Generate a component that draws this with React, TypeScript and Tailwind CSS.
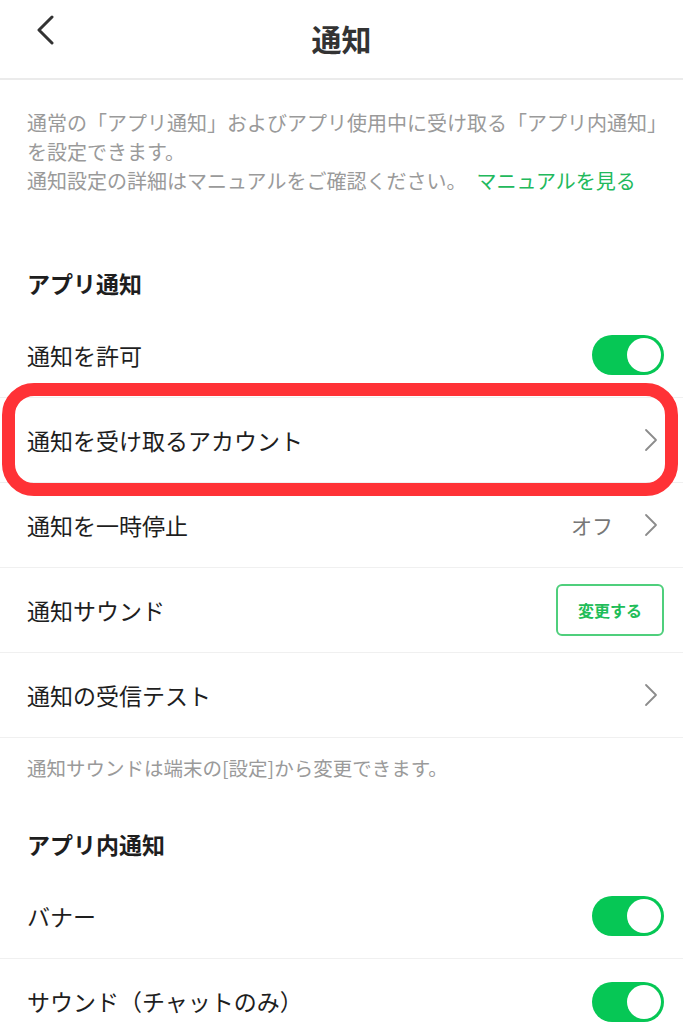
import React from "react";

const font = { fontFamily: '"Noto Sans CJK JP", "Noto Sans", sans-serif' };

function Toggle() {
    return (
        <div className="flex h-[40px] w-[72px] items-center justify-end rounded-full bg-[#06c755] pr-[3px]">
            <div className="h-[34px] w-[34px] rounded-full bg-white" />
        </div>
    );
}

function Chevron() {
    return (
        <svg width="16" height="24" viewBox="0 0 16 24" className="block">
            <polyline points="3,2 13,12 3,22" fill="none" stroke="#8c8c8c" strokeWidth="1.8" strokeLinecap="round" strokeLinejoin="round" />
        </svg>
    );
}

function Row({ label, right, divider = true, children }: { label: string; right?: React.ReactNode; divider?: boolean; children?: React.ReactNode }) {
    return (
        <div className={`relative flex h-[85px] items-center justify-between pl-[27px] ${divider ? "border-b border-[#f0f0f0]" : ""}`}>
            <span className="text-[23px] leading-none text-[#1e1e1e]">{label}</span>
            {right}
            {children}
        </div>
    );
}

export default function App() {
    return (
        <div className="min-h-[1024px] w-full overflow-hidden bg-white" style={font}>
            {/* header */}
            <div className="relative flex h-[80px] items-center justify-center border-b-2 border-[#ebebeb]">
                <button className="absolute left-[34px] top-[15px]">
                    <svg width="22" height="30" viewBox="0 0 22 30" className="block">
                        <polyline points="18,2 5,15 18,28" fill="none" stroke="#333" strokeWidth="3" strokeLinecap="round" strokeLinejoin="round" />
                    </svg>
                </button>
                <h1 className="-mt-[2px] text-[30px] font-bold leading-none text-[#333]">通知</h1>
            </div>

            {/* description */}
            <div className="h-[173px] px-[27px] pt-[28px] text-[20px] leading-[29px] text-[#9a9a9a]">
                <p className="whitespace-nowrap">通常の「アプリ通知」およびアプリ使用中に受け取る「アプリ内通知」</p>
                <p>を設定できます。</p>
                <p className="whitespace-nowrap">
                    通知設定の詳細はマニュアルをご確認ください。
                    <span className="ml-[10px] text-[#22b95c]">マニュアルを見る</span>
                </p>
            </div>

            {/* app notifications */}
            <div className="flex h-[60px] items-center pl-[27px]">
                <h2 className="text-[23px] font-bold leading-none text-[#1e1e1e]">アプリ通知</h2>
            </div>
            <Row label="通知を許可" right={<div className="pr-[19px]"><Toggle /></div>} />
            <Row label="通知を受け取るアカウント" right={<div className="pr-[24px]"><Chevron /></div>}>
                <div className="pointer-events-none absolute -bottom-[14px] left-[2px] right-[5px] -top-[15px] rounded-[32px] border-[13px] border-[#ff3236]" />
            </Row>
            <Row
                label="通知を一時停止"
                right={
                    <div className="flex items-center gap-[30px] pr-[24px]">
                        <span className="text-[21px] leading-none text-[#777]">オフ</span>
                        <Chevron />
                    </div>
                }
            />
            <Row
                label="通知サウンド"
                right={
                    <div className="pr-[19px]">
                        <button className="flex h-[52px] w-[108px] items-center justify-center rounded-[6px] border-2 border-[#4fcf7c] text-[16px] font-bold text-[#1fbd59]">
                            変更する
                        </button>
                    </div>
                }
            />
            <Row label="通知の受信テスト" right={<div className="pr-[24px]"><Chevron /></div>} />

            <div className="flex h-[60px] items-center pl-[27px]">
                <p className="text-[19.5px] leading-none text-[#9a9a9a]">通知サウンドは端末の[設定]から変更できます。</p>
            </div>

            {/* in-app notifications */}
            <div className="mt-[16px] flex h-[60px] items-center pl-[27px]">
                <h2 className="text-[23px] font-bold leading-none text-[#1e1e1e]">アプリ内通知</h2>
            </div>
            <Row label="バナー" right={<div className="pr-[19px]"><Toggle /></div>} />
            <Row label="サウンド（チャットのみ）" divider={false} right={<div className="pr-[19px]"><Toggle /></div>} />
        </div>
    );
}
